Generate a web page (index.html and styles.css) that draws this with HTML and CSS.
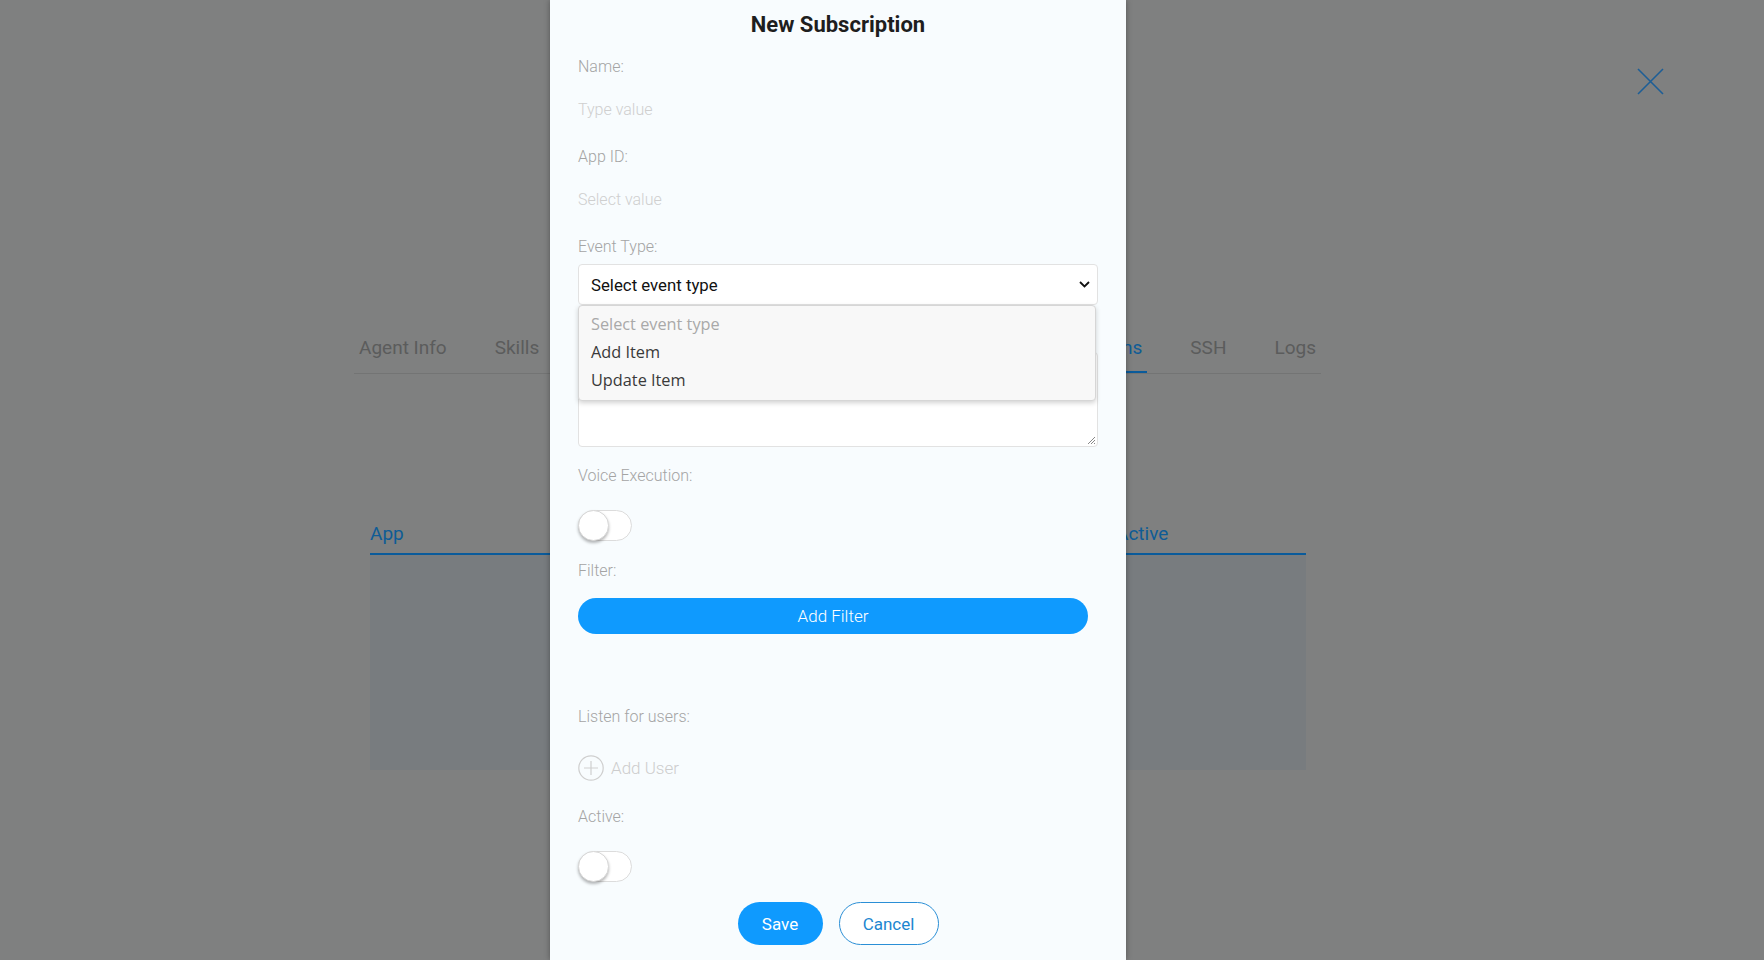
FILE: index.html
```html
<!DOCTYPE html>
<html lang="en">
<head>
<meta charset="utf-8">
<title>New Subscription</title>
<link rel="stylesheet" href="styles.css">
</head>
<body>
<div class="page">
  <nav class="tabs">
    <div class="tab">Agent Info</div>
    <div class="tab">Skills</div>
    <div class="tab-spacer"></div>
    <div class="tab tab-active">Subscriptions</div>
    <div class="tab">SSH</div>
    <div class="tab">Logs</div>
  </nav>
  <div class="table">
    <div class="table-head">
      <div class="th">App</div>
      <div class="th">Active</div>
    </div>
    <div class="table-body"></div>
  </div>
</div>

<button class="close-btn" aria-label="Close">
  <svg width="27" height="27" viewBox="0 0 27 27"><path d="M1 1L26 26M26 1L1 26" stroke="#1d5e96" stroke-width="1.6" fill="none"/></svg>
</button>

<div class="modal">
  <h2 class="modal-title">New Subscription</h2>

  <div class="label label-first">Name:</div>
  <div class="input-plain">Type value</div>

  <div class="label">App ID:</div>
  <div class="input-plain">Select value</div>

  <div class="label">Event Type:</div>
  <div class="select-wrap">
    <div class="select">
      <span>Select event type</span>
      <svg width="11" height="7" viewBox="0 0 11 7"><path d="M1 1l4.5 4.5L10 1" stroke="#111" stroke-width="1.8" fill="none"/></svg>
    </div>
    <ul class="dropdown">
      <li class="opt opt-muted">Select event type</li>
      <li class="opt">Add Item</li>
      <li class="opt">Update Item</li>
    </ul>
  </div>

  <div class="textarea">
    <svg class="grip" width="10" height="10" viewBox="0 0 10 10"><path d="M9 2L2 9M9 5L5 9M9 8L8 9" stroke="#888" stroke-width="1" fill="none"/></svg>
  </div>

  <div class="label label-voice">Voice Execution:</div>
  <div class="toggle toggle-voice"><span class="knob"></span></div>

  <div class="label label-filter">Filter:</div>
  <button class="btn-filter">Add Filter</button>

  <div class="label label-listen">Listen for users:</div>
  <div class="add-user">
    <svg width="26" height="26" viewBox="0 0 26 26"><circle cx="13" cy="13" r="12.2" stroke="#cfcfcf" stroke-width="1.2" fill="none"/><path d="M13 6v14M6 13h14" stroke="#cfcfcf" stroke-width="1.2"/></svg>
    <span>Add User</span>
  </div>

  <div class="label label-active">Active:</div>
  <div class="toggle toggle-active"><span class="knob"></span></div>

  <div class="actions">
    <button class="btn-save">Save</button>
    <button class="btn-cancel">Cancel</button>
  </div>
</div>
</body>
</html>
```
FILE: styles.css
```css
* { box-sizing: border-box; }
html, body { margin: 0; padding: 0; }
body {
  width: 1764px;
  height: 960px;
  overflow: hidden;
  background: #7f8080;
  font-family: Roboto, "Liberation Sans", sans-serif;
  position: relative;
}

/* background page (dimmed) */
.page { padding-top: 336px; }
.tabs {
  display: flex;
  gap: 38px;
  margin-left: 354px;
  width: 967px;
  border-bottom: 1px solid #737474;
}
.tab {
  padding: 0 5px 11px;
  font-size: 19px;
  line-height: 24px;
  color: #5b5c5c;
  border-bottom: 2px solid transparent;
}
.tab-spacer { flex: 1; }
.tab-active { color: #0e5c96; border-bottom-color: #0a5b9b; }
.table {
  margin: 148px 0 0 370px;
  width: 936px;
}
.table-head {
  display: grid;
  grid-template-columns: 746px 1fr;
  padding-bottom: 7px;
  border-bottom: 2px solid #0a5b9b;
}
.th { font-size: 19px; line-height: 24px; color: #0e5c96; }
.table-body { height: 215px; background: #787c7f; }

.close-btn {
  position: absolute;
  left: 1637px;
  top: 68px;
  padding: 0;
  border: 0;
  background: none;
  width: 27px;
  height: 27px;
}
.close-btn svg { display: block; }

/* modal */
.modal {
  position: absolute;
  left: 550px;
  top: 0;
  width: 576px;
  height: 960px;
  background: #f8fcfe;
  box-shadow: 0 0 6px rgba(0,0,0,0.35);
  padding: 0 28px;
  display: flex;
  flex-direction: column;
  align-items: flex-start;
}
.modal-title {
  margin: 0;
  align-self: stretch;
  text-align: center;
  font-size: 22px;
  font-weight: 700;
  line-height: 50px;
  color: #1e1e1e;
}
.label {
  font-size: 16px;
  font-weight: 300;
  line-height: 20px;
  color: #a4a4a4;
  margin-top: 17px;
}
.label-first { margin-top: 7px; }
.input-plain {
  margin-top: 13px;
  height: 40px;
  line-height: 40px;
  font-size: 16px;
  font-weight: 300;
  color: #cfcfcf;
}
.select-wrap {
  position: relative;
  margin-top: 7px;
  width: 520px;
}
.select {
  height: 41px;
  border: 1px solid #e2e2e2;
  border-radius: 4px;
  background: #fff;
  display: flex;
  align-items: center;
  justify-content: space-between;
  padding: 0 7px 0 12px;
  font-size: 16.8px;
  color: #111;
}
.dropdown {
  position: absolute;
  top: 41px;
  left: 0;
  width: 518px;
  margin: 0;
  padding: 4px 0 6px;
  list-style: none;
  background: #f8f8f8;
  border: 1px solid #d6d6d6;
  border-radius: 4px;
  box-shadow: 0 2px 5px rgba(0,0,0,0.18);
  z-index: 2;
}
.opt {
  padding: 0 12px;
  line-height: 28px;
  font-family: "Open Sans", "Noto Sans", sans-serif;
  font-size: 16.3px;
  color: #3a3a3a;
}
.opt-muted { color: #a9a9a9; }
.textarea {
  position: relative;
  margin-top: 47px;
  width: 520px;
  height: 95px;
  border: 1px solid #e2e2e2;
  border-radius: 4px;
  background: #fff;
}
.grip { position: absolute; right: 1px; bottom: 1px; }
.label-voice { margin-top: 19px; }
.toggle {
  position: relative;
  width: 54px;
  height: 31px;
  border: 1px solid #dcdcdc;
  border-radius: 16px;
  background: #fff;
}
.knob {
  position: absolute;
  left: -1px;
  top: -1px;
  width: 31px;
  height: 31px;
  border-radius: 50%;
  background: #fff;
  border: 1px solid #d8d8d8;
  box-shadow: 0 2px 3px rgba(0,0,0,0.28);
}
.toggle-voice { margin-top: 24px; }
.label-filter { margin-top: 20px; }
.btn-filter {
  margin-top: 17px;
  width: 510px;
  height: 36px;
  border: 0;
  border-radius: 18px;
  background: #0f9afe;
  color: #fff;
  font-family: Roboto, sans-serif;
  font-size: 17px;
  font-weight: 300;
}
.label-listen { margin-top: 73px; }
.add-user {
  margin-top: 28px;
  display: flex;
  align-items: center;
  gap: 7px;
  height: 26px;
  font-size: 17px;
  font-weight: 300;
  color: #cdcdcd;
}
.add-user svg { display: block; }
.label-active { margin-top: 26px; }
.toggle-active { margin-top: 24px; }
.actions {
  margin-top: 20px;
  align-self: stretch;
  display: flex;
  justify-content: center;
  gap: 16px;
}
.btn-save, .btn-cancel {
  height: 43px;
  border-radius: 22px;
  font-family: Roboto, sans-serif;
  font-size: 17px;
}
.btn-save {
  width: 85px;
  border: 0;
  background: #0f9afe;
  color: #fff;
}
.btn-cancel {
  width: 100px;
  border: 1px solid #2b8fd6;
  background: #fff;
  color: #1c86d0;
}
```
